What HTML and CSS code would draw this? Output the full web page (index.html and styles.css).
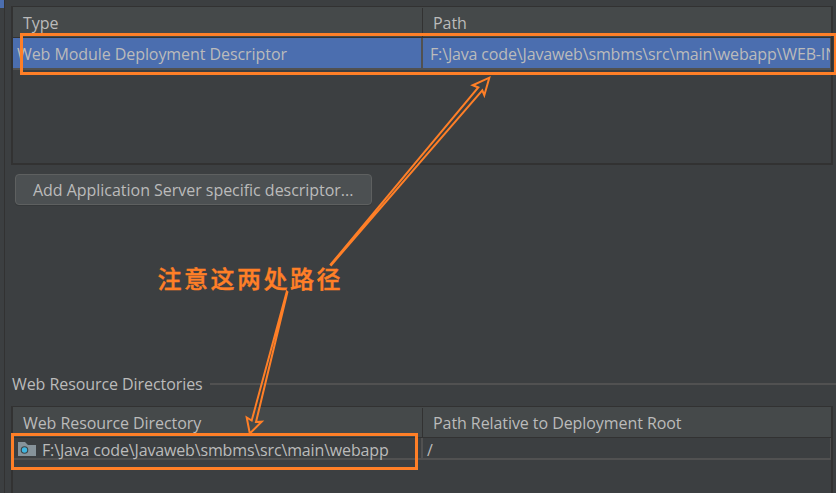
FILE: index.html
```html
<!DOCTYPE html>
<html lang="en">
<head>
<meta charset="utf-8">
<title>Deployment Descriptors</title>
<link rel="stylesheet" href="styles.css">
</head>
<body>
<div class="window">
  <aside class="rail"><div class="rail-selection"></div></aside>
  <main class="content">
    <section class="table descriptors">
      <div class="row head">
        <div class="cell"><span>Type</span></div>
        <div class="cell"><span>Path</span></div>
      </div>
      <div class="row body selected">
        <div class="cell"><span>Web Module Deployment Descriptor</span></div>
        <div class="cell"><span class="file-path">F:\Java code\Javaweb\smbms\src\main\webapp\WEB-IN</span></div>
      </div>
    </section>
    <button class="add"><span>Add Application Server specific descriptor...</span></button>
    <div class="section-title"><span>Web Resource Directories</span><i class="rule"></i></div>
    <section class="table resources">
      <div class="row head">
        <div class="cell"><span>Web Resource Directory</span></div>
        <div class="cell"><span>Path Relative to Deployment Root</span></div>
      </div>
      <div class="row body">
        <div class="cell">
          <svg class="folder" width="18" height="15" viewBox="0 0 18 15"><path d="M0 0H7L10 3H18V14H0Z" fill="#87939a"/><circle cx="6.5" cy="8" r="3.8" fill="#3c4447"/><circle cx="6.5" cy="8" r="2.7" fill="#40b6e0"/></svg>
          <span class="file-path">F:\Java code\Javaweb\smbms\src\main\webapp</span>
        </div>
        <div class="cell"><span>/</span></div>
      </div>
    </section>
  </main>
  <div class="mark mark-top"></div>
  <div class="mark mark-bottom"></div>
  <div class="note" lang="zh-CN">注意这两处路径</div>
  <svg class="arrows" width="836" height="493" viewBox="0 0 836 493">
    <path d="M330.7 264.5L478.3 87.5L472.7 85.3L489.3 77.7L484.3 95.2L482.3 90.3L331.3 265Z"/>
    <path d="M286.8 291.5L251.7 420.5L246.7 417.5L249.8 433.5L261.7 421.7L256 422L287.4 292Z"/>
  </svg>
</div>
</body>
</html>
```
FILE: styles.css
```css
* { box-sizing: border-box; }
body {
  margin: 0;
  background: #3c3f41;
  color: #bbbbbb;
  font: 16px/20px "Open Sans", "Noto Sans", sans-serif;
  letter-spacing: -.07px;
}
.window { position: relative; display: flex; width: 836px; height: 493px; overflow: hidden; }
.rail { width: 5px; border-right: 1px solid #323232; }
.rail-selection { height: 8px; background: #4b6eaf; }
.content { flex: 1; min-width: 0; padding: 6px 3px 0 6px; }
.table { border: 2px solid #323232; border-top-width: 1px; width: 822px; }
.descriptors { height: 159px; }
.resources { height: 120px; margin-top: 11px; }
.row { display: grid; grid-template-columns: 410px 408px; }
.cell { display: flex; align-items: center; white-space: nowrap; }
.head { height: 31px; background: #45494a; border-bottom: 1px solid #323232; }
.head .cell { padding: 2px 0 0 10px; }
.head .cell + .cell { border-left: 1px solid #323232; margin: 1px 0 0 -1px; padding-top: 1px; }
.body { height: 22px; border-bottom: 2px solid #515151; }
.body .cell { border-right: 1px solid #515151; }
.body .cell:first-child { border-right-width: 2px; }
.selected { height: 32px; background: #4b6eaf; }
.selected .cell { padding: 2px 0 0 4px; }
.selected .cell + .cell { padding: 1px 0 0 7px; overflow: hidden; }
.file-path { letter-spacing: -.15px; }
.resources .body { grid-template-rows: 20px; }
.resources .body .cell { align-items: flex-start; padding: 2px 0 0 5px; }
.resources .body .cell + .cell { padding-left: 4px; }
.folder { flex: none; margin: 2px 6px 0 0; }
.add {
  display: flex; align-items: center; width: 357px; height: 31px; margin: 9px 0 0 4px; padding: 1px 0 0 17px;
  color: #bbbbbb; background: #4c5052; border: 1px solid #5e6060; border-radius: 4px;
  box-shadow: 0 1px 0 #35383a; font: inherit; letter-spacing: -.03px; white-space: nowrap;
}
.section-title { display: flex; align-items: center; height: 22px; margin: 168px -3px 0 1px; white-space: nowrap; }
.rule { flex: 1; height: 2px; margin-left: 7px; background: #515151; }
.mark { position: absolute; border: 3px solid #ff7f27; }
.mark-top { left: 20px; top: 33px; width: 817px; height: 42px; }
.mark-bottom { left: 11px; top: 433px; width: 407px; height: 37px; }
.note {
  position: absolute; left: 157.5px; top: 260px; color: #ff7f27; white-space: nowrap;
  font: 500 24px/36px "Noto Sans CJK SC", sans-serif; letter-spacing: 2.5px; -webkit-text-stroke: .4px #ff7f27;
}
.arrows { position: absolute; left: 0; top: 0; fill: none; stroke: #ff7f27; stroke-width: 2; }
```
